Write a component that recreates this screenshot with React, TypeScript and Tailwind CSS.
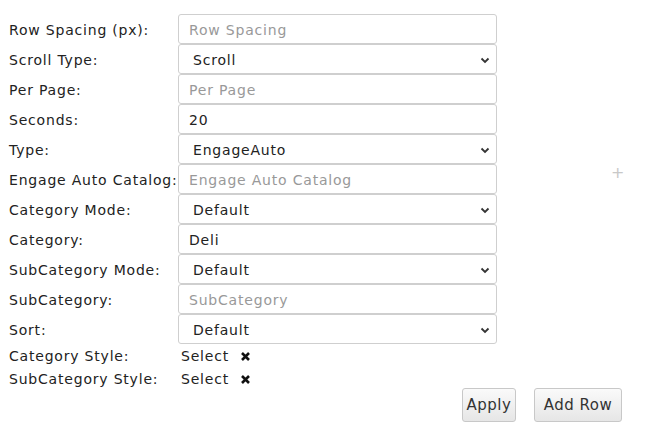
import React from "react";

const font = { fontFamily: '"DejaVu Sans", Verdana, sans-serif' };

function Chevron() {
  return (
    <svg width="10" height="7" viewBox="0 0 10 7" className="absolute right-[6px] top-[12px]">
      <path d="M1.5 1.5 L5 5 L8.5 1.5" fill="none" stroke="#333" strokeWidth="1.8" />
    </svg>
  );
}

function TextBox({ value, placeholder }: { value?: string; placeholder?: string }) {
  return (
    <div className="h-[30px] w-[319px] border border-[#cfcfcf] rounded-[3px] bg-white flex items-center pl-[10px] pt-[2px] text-[14px]">
      {value ? <span className="text-[#222]">{value}</span> : <span className="text-[#999]">{placeholder}</span>}
    </div>
  );
}

function SelectBox({ value }: { value: string }) {
  return (
    <div className="relative h-[30px] w-[319px] border border-[#cfcfcf] rounded-[3px] bg-white flex items-center pl-[14px] pt-[2px] text-[14px] text-[#222]">
      <span>{value}</span>
      <Chevron />
    </div>
  );
}

const rows: { label: string; kind: "t" | "s"; value?: string; ph?: string }[] = [
  { label: "Row Spacing (px):", kind: "t", ph: "Row Spacing" },
  { label: "Scroll Type:", kind: "s", value: "Scroll" },
  { label: "Per Page:", kind: "t", ph: "Per Page" },
  { label: "Seconds:", kind: "t", value: "20" },
  { label: "Type:", kind: "s", value: "EngageAuto" },
  { label: "Engage Auto Catalog:", kind: "t", ph: "Engage Auto Catalog" },
  { label: "Category Mode:", kind: "s", value: "Default" },
  { label: "Category:", kind: "t", value: "Deli" },
  { label: "SubCategory Mode:", kind: "s", value: "Default" },
  { label: "SubCategory:", kind: "t", ph: "SubCategory" },
  { label: "Sort:", kind: "s", value: "Default" },
];

function Cross() {
  return (
    <svg width="11" height="11" viewBox="0 0 11 11">
      <path d="M2 2 L9 9 M9 2 L2 9" stroke="#111" strokeWidth="2.6" strokeLinecap="butt" />
    </svg>
  );
}

export default function App() {
  return (
    <div className="relative w-[649px] h-[443px] bg-white text-[#222] text-[14px] tracking-[0.8px]" style={font}>
      <div className="pt-[14px] pl-[9px] flex flex-col">
        {rows.map((r) => (
          <div key={r.label} className="flex items-center h-[30px]">
            <div className="w-[169px] whitespace-nowrap pt-[2px]">{r.label}</div>
            {r.kind === "t" ? <TextBox value={r.value} placeholder={r.ph} /> : <SelectBox value={r.value!} />}
          </div>
        ))}
        <div className="flex items-center h-[23px] mt-[1px]">
          <div className="w-[172px] whitespace-nowrap">Category Style:</div>
          <span>Select</span>
          <span className="ml-[11px] flex items-center"><Cross /></span>
        </div>
        <div className="flex items-center h-[23px]">
          <div className="w-[172px] whitespace-nowrap">SubCategory Style:</div>
          <span>Select</span>
          <span className="ml-[11px] flex items-center"><Cross /></span>
        </div>
        <div className="flex justify-end gap-[18px] pr-[27px] -mt-[3px]">
          <button className="h-[34px] w-[54px] border border-[#c8c8c8] rounded-[3px] bg-gradient-to-b from-[#fafafa] to-[#e6e6e6] text-[#333] text-[15px] tracking-[0.5px]">Apply</button>
          <button className="h-[34px] w-[88px] border border-[#c8c8c8] rounded-[3px] bg-gradient-to-b from-[#fafafa] to-[#e6e6e6] text-[#333] text-[15px] tracking-[0.5px]">Add Row</button>
        </div>
      </div>
      <div className="absolute left-[611px] top-[161px] text-[#c8c8c8] text-[16px]">+</div>
    </div>
  );
}
